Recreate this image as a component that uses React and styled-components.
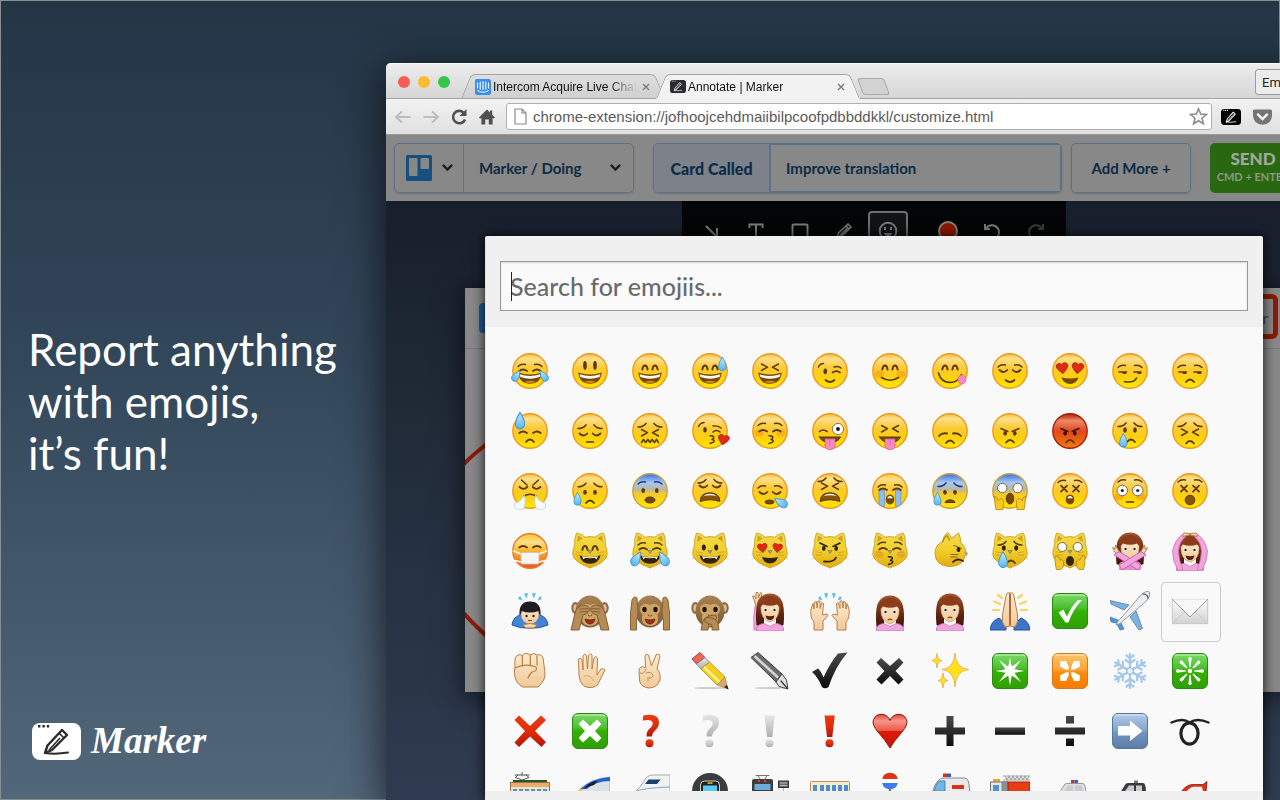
import React from 'react';
import styled, { createGlobalStyle } from 'styled-components';

const GlobalStyle = createGlobalStyle`
  * {
    box-sizing: border-box;
  }

  body {
    margin: 0;
    font-family: Lato, sans-serif;
  }

  button, input {
    font-family: inherit;
    margin: 0;
  }
`;

/* ---------- layout ---------- */

const Page = styled.div`
  position: relative;
  display: flex;
  height: 100vh;
  overflow: hidden;
  background: linear-gradient(#243546, #33475a 45%, #53677b);

  &::after {
    content: '';
    position: absolute;
    inset: 0;
    border: 1px solid #8b8e91;
    pointer-events: none;
  }
`;

const Promo = styled.aside`
  display: flex;
  flex-direction: column;
  justify-content: space-between;
  flex: 0 0 386px;
  padding: 323px 0 36px 28px;
  color: white;
`;

const Headline = styled.h1`
  margin: 0;
  font-size: 44px;
  font-weight: 400;
  line-height: 52px;
`;

const Logo = styled.div`
  display: flex;
  align-items: center;
  gap: 10px;
  padding-left: 4px;
  height: 46px;
`;

const LogoName = styled.span`
  font-family: 'Liberation Serif', serif;
  font-size: 37px;
  font-style: italic;
  font-weight: 700;
  line-height: 44px;
`;

const BrowserWindow = styled.main`
  position: relative;
  z-index: 1;
  display: flex;
  flex-direction: column;
  flex: 1;
  margin: 63px -82px 0 0;
  border-radius: 5px 5px 0 0;
  box-shadow: 0 10px 40px 4px rgba(0, 0, 0, 0.6);
`;

const TabStrip = styled.div`
  display: flex;
  align-items: flex-end;
  height: 36px;
  padding-left: 12px;
  border-bottom: 1px solid #a3a3a3;
  border-radius: 5px 5px 0 0;
  background: linear-gradient(#ededed, #d6d6d6);
  box-shadow: inset 0 1px 0 #f8f8f8;
`;

const Lights = styled.div`
  display: flex;
  gap: 8px;
  width: 68px;
  padding-bottom: 10px;
`;

const Light = styled.span`
  width: 12px;
  height: 12px;
  border-radius: 50%;
  background: ${props => props.color};
`;

const Tab = styled.div`
  position: relative;
  z-index: ${props => (props.$active ? 2 : 1)};
  display: flex;
  align-items: center;
  width: 194px;
  height: 25px;
  margin: 0 1px -1px 0;
  padding: 0 7px 0 9px;
  gap: 2px;
  font-family: 'Liberation Sans', sans-serif;
  font-size: 12px;
  color: #111;

  &::before, &::after {
    content: '';
    position: absolute;
    z-index: -1;
    top: 0;
    bottom: 0;
    border: 1px solid #a3a3a3;
    border-bottom: 1px solid ${props => (props.$active ? '#f2f2f2' : '#a3a3a3')};
    background: ${props => (props.$active ? '#f2f2f2' : 'linear-gradient(#dedede, #d0d0d0)')};
  }

  &::before {
    left: 0;
    right: 50%;
    border-right: 0;
    border-radius: 5px 0 0 0;
    transform: skewX(-22deg);
  }

  &::after {
    left: 40%;
    right: 0;
    border-left: 0;
    border-radius: 0 5px 0 0;
    transform: skewX(22deg);
  }
`;

const TabTitle = styled.span`
  flex: 1;
  overflow: hidden;
  white-space: nowrap;
  line-height: 16px;
  mask-image: linear-gradient(to right, black 80%, transparent);
`;

const TabClose = styled.button`
  display: flex;
  padding: 3px;
  border: 0;
  background: none;
`;

const NewTab = styled.button`
  width: 27px;
  height: 17px;
  margin: 0 0 3px 4px;
  padding: 0;
  border: 1px solid #aaa;
  border-radius: 3px;
  background: #d2d2d2;
  transform: skewX(20deg);
`;

const ProfileButton = styled.button`
  width: 90px;
  height: 26px;
  margin: 0 17px 3px auto;
  padding: 0 6px;
  border: 1px solid #9b9b9b;
  border-radius: 3px;
  background: #ececec;
  font-family: Roboto, sans-serif;
  font-size: 13px;
  text-align: left;
  color: #222;
`;

const NavBar = styled.div`
  display: flex;
  align-items: center;
  height: 36px;
  padding: 0 8px 0 3px;
  border-bottom: 1px solid #9a9a9a;
  background: linear-gradient(#f2f2f2, #e0e0e0);
`;

const NavButton = styled.button`
  display: flex;
  justify-content: center;
  width: 28px;
  padding: 0;
  border: 0;
  background: none;
`;

const AddressBar = styled.div`
  display: flex;
  align-items: center;
  flex: 1;
  height: 27px;
  margin: 0 9px 0 5px;
  padding: 0 3px 0 7px;
  gap: 6px;
  border: 1px solid #b0b0b0;
  border-radius: 3px;
  background: white;
`;

const AddressInput = styled.input`
  flex: 1;
  padding: 0;
  border: 0;
  outline: 0;
  background: none;
  font-family: 'Liberation Sans', sans-serif;
  font-size: 15px;
  color: #5a5a5a;
`;

const Extensions = styled.div`
  display: flex;
  gap: 12px;
  width: 133px;
`;

/* ---------- extension page, dimmed under the picker ---------- */

const Workspace = styled.section`
  position: relative;
  display: flex;
  flex-direction: column;
  flex: 1;
  min-height: 0;
  overflow: hidden;
  background: linear-gradient(#151b28, #202a37 40%, #2f3b50);
`;

const CardBar = styled.div`
  display: flex;
  padding: 8px;
  height: 66px;
  background: #888;
  font-size: 16px;
  font-weight: 700;
  color: #0d2b45;
`;

const Group = styled.div`
  display: flex;
  height: 50px;
  margin-right: ${props => props.$gap}px;
  border: 1px solid #5d7184;
  border-radius: 5px;
  box-shadow: 0 1px 2px rgba(0, 0, 0, 0.15);
  overflow: hidden;
`;

const BarButton = styled.button`
  display: flex;
  align-items: center;
  justify-content: ${props => (props.$spread ? 'space-between' : 'center')};
  width: ${props => props.$width}px;
  padding: 0 ${props => (props.$spread ? 12 : 0)}px 0 ${props => (props.$spread ? 15 : 0)}px;
  gap: 10px;
  border: 0;
  border-right: ${props => (props.$divided ? '1px solid #5d7184' : '0')};
  background: none;
  font-size: 15px;
  font-weight: 700;
  color: inherit;
`;

const CardLabel = styled.label`
  display: flex;
  align-items: center;
  justify-content: center;
  width: 115px;
  background: #7d828a;
  font-weight: 900;
`;

const CardInput = styled.input`
  width: 292px;
  padding: 0 15px;
  border: 1px solid #5d7184;
  border-width: 1px 1px 1px 2px;
  outline: 0;
  background: none;
  font-size: 15px;
  font-weight: 700;
  color: inherit;
`;

const SendButton = styled.button`
  width: 86px;
  height: 50px;
  margin-left: 11px;
  padding: 0;
  border: 0;
  border-radius: 5px;
  background: #2a6711;
  color: #a2a89e;
  font-size: 17px;
  font-weight: 900;
  line-height: 18px;
`;

const SendHint = styled.small`
  display: block;
  font-size: 11px;
  font-weight: 700;
  color: #8b9a82;
`;

const Tools = styled.div`
  display: flex;
  align-self: center;
  width: 384px;
  height: 60px;
  padding: 10px;
  gap: 4px;
  background: #040506;
`;

const Tool = styled.button`
  display: flex;
  align-items: center;
  justify-content: center;
  flex: 0 0 40px;
  height: 40px;
  padding: 0;
  border: ${props => (props.$active ? '2px solid #6b6d6e' : '0')};
  border-radius: 4px;
  background: ${props => (props.$active ? '#111314' : 'none')};
  opacity: ${props => (props.$faded ? 0.45 : 1)};
`;

const ToolDivider = styled.span`
  width: 1px;
  height: 30px;
  margin: 5px 4px 5px 8px;
  background: #2b2c2d;
`;

const Shot = styled.div`
  position: relative;
  align-self: center;
  width: 818px;
  height: 404px;
  margin-top: 27px;
  background: #888;
  box-shadow: 0 4px 22px 4px rgba(0, 0, 0, 0.5);
`;

const ShotHeader = styled.div`
  display: flex;
  justify-content: space-between;
  height: 61px;
  padding: 6px 5px 0 14px;
  border-bottom: 1px solid #777;
`;

const ShotBrand = styled.span`
  width: 30px;
  height: 30px;
  margin-top: 9px;
  border-radius: 4px;
  background: #21568f;
`;

const Highlighted = styled.span`
  width: 120px;
  height: 45px;
  padding-right: 5px;
  border: 5px solid #8c1a08;
  border-radius: 6px;
  font-size: 16px;
  line-height: 38px;
  text-align: right;
  color: #3f474f;
`;

const Sketch = styled.svg`
  position: absolute;
  left: 0;
  top: 0;
`;

/* ---------- emoji picker ---------- */

const Overlay = styled.div`
  position: absolute;
  inset: 0;
  display: flex;
  justify-content: center;
  padding-top: 101px;
`;

const Picker = styled.div`
  display: flex;
  flex-direction: column;
  width: 778px;
  padding-bottom: 9px;
  border-left: 1px solid #e4e4e4;
  border-radius: 2px 2px 0 0;
  background: #f0f0f0;
  box-shadow: 0 0 12px 1px rgba(0, 0, 0, 0.75);
`;

const SearchBox = styled.div`
  position: relative;
  padding: 25px 15px 16px 14px;

  &::after {
    content: '';
    position: absolute;
    left: 25px;
    top: 36px;
    width: 1px;
    height: 29px;
    background: #222;
  }
`;

const SearchInput = styled.input`
  display: block;
  width: 100%;
  height: 50px;
  padding: 0 9px;
  border: 1px solid #999;
  border-radius: 0;
  outline: 0;
  background: #fafafa;
  box-shadow: inset 0 1px 2px rgba(0, 0, 0, 0.15);
  font-size: 25px;
  font-weight: 500;
  color: #333;

  &::placeholder {
    color: #6a6a6a;
    opacity: 1;
  }
`;

const EmojiList = styled.div`
  display: grid;
  grid-template-columns: repeat(12, 60px);
  grid-auto-rows: 60px;
  flex: 1;
  min-height: 0;
  padding: 15px;
  overflow: hidden;
  background: #f9f9f9;
`;

const EmojiButton = styled.button`
  display: flex;
  align-items: flex-start;
  padding: 8px;
  border: 1px solid ${props => (props.$selected ? '#ccc' : 'transparent')};
  border-radius: 4px;
  background: none;
`;

const Defs = styled.svg`
  position: absolute;
  width: 0;
  height: 0;
`;

/* ---------- drawing helpers, all on a 40 x 40 grid ---------- */

const INK = '#5a3906';

const Line = ({ d, c = INK, w = 1.6, fill = 'none' }) => (
  <path d={d} stroke={c} strokeWidth={w} strokeLinecap="round" strokeLinejoin="round" fill={fill} />
);

const Pair = ({ children }) => (
  <>
    {children}
    <g transform="matrix(-1 0 0 1 40 0)">{children}</g>
  </>
);

const Gradient = ({ id, stops }) => (
  <linearGradient id={id} x1="0" y1="0" x2="0" y2="1">
    {stops.map(([offset, color]) => (
      <stop key={offset} offset={offset} stopColor={color} />
    ))}
  </linearGradient>
);

const Gradients = () => (
  <Defs aria-hidden="true">
    <defs>
      <Gradient id="face" stops={[[0, '#f9bc34'], [0.14, '#fcdf8c'], [0.42, '#fbca34'], [0.7, '#fbd00c'], [1, '#ffea00']]} />
      <Gradient id="rage" stops={[[0, '#b01c08'], [0.2, '#ee8a68'], [0.5, '#e0481c'], [1, '#f27a08']]} />
      <Gradient id="fear" stops={[[0, '#2f6fe6'], [0.25, '#a9c6ee'], [0.46, '#b9b9a0'], [0.58, '#f5c92c'], [1, '#ffe800']]} />
      <Gradient id="sick" stops={[[0, '#fbc42c'], [0.25, '#fde08a'], [0.5, '#fbb42c'], [1, '#ee4f1c']]} />
      <Gradient id="cat" stops={[[0, '#f3dc4a'], [0.5, '#f1cf2c'], [1, '#e0ac10']]} />
      <Gradient id="drop" stops={[[0, '#c9ecfb'], [1, '#57b4ee']]} />
      <Gradient id="green" stops={[[0, '#7ed968'], [0.4, '#4cc232'], [0.5, '#35b004'], [1, '#2f9f06']]} />
      <Gradient id="orange" stops={[[0, '#fbc56a'], [0.45, '#fba53a'], [0.55, '#f98a0c'], [1, '#f57c00']]} />
      <Gradient id="blue" stops={[[0, '#b2cbe8'], [0.45, '#86a7cf'], [0.55, '#7094c0'], [1, '#5c7ca6']]} />
      <Gradient id="red" stops={[[0, '#ee3a12'], [0.55, '#dc2c0a'], [1, '#b4140a']]} />
      <Gradient id="black" stops={[[0, '#4a4a4a'], [1, '#0d0d0d']]} />
      <Gradient id="grey" stops={[[0, '#e6e6e6'], [1, '#b0b0b0']]} />
      <Gradient id="heart" stops={[[0, '#e8443a'], [0.2, '#f3978c'], [0.48, '#ec5a46'], [0.5, '#dd1c08'], [1, '#c81004']]} />
      <Gradient id="skin" stops={[[0, '#fdebcc'], [1, '#f0c898']]} />
      <Gradient id="hair" stops={[[0, '#a4552c'], [0.5, '#6e2c14'], [1, '#3c140a']]} />
      <Gradient id="monkey" stops={[[0, '#a98252'], [1, '#7d5a30']]} />
      <Gradient id="paper" stops={[[0, '#fcfcfc'], [1, '#d2d2d2']]} />
    </defs>
  </Defs>
);

const Art = ({ children }) => (
  <svg width="40" height="40" viewBox="0 0 40 40" aria-hidden="true">{children}</svg>
);

const Face = ({ fill = 'face', ring = '#ee9a20', children }) => (
  <Art>
    <circle cx="20" cy="20" r="17.2" fill={`url(#${fill})`} stroke={ring} strokeWidth="1.4" />
    {children}
  </Art>
);

const Oval = ({ x = 15, y = 18, rx = 1.8, ry = 2.8, c = INK }) => (
  <Pair><ellipse cx={x} cy={y} rx={rx} ry={ry} fill={c} /></Pair>
);

const Arches = ({ y = 0 }) => (
  <g transform={`translate(0 ${y})`}>
    <Pair><Line d="M12.3 18.5Q13 14.5 15 14.5Q17 14.5 17.6 18.5" w={1.9} /></Pair>
  </g>
);

const Squints = ({ y = 0 }) => (
  <g transform={`translate(0 ${y})`}>
    <Pair><Line d="M11.5 13L17.5 16.2L11.5 19.5" w={1.5} /></Pair>
  </g>
);

const Lids = ({ y = 19 }) => (
  <Pair><Line d={`M9.5 ${y}Q13.5 ${y + 4} 17.3 ${y}`} w={1.8} /></Pair>
);

const Naps = ({ y = 21.5 }) => (
  <Pair><Line d={`M9.3 ${y}Q13 ${y - 3} 17 ${y}`} w={1.8} /></Pair>
);

const SadBrows = ({ y = 15.5, c = INK }) => (
  <Pair><Line d={`M8 ${y}Q13 ${y} 16 ${y - 3.6}`} c={c} w={1.5} /></Pair>
);

const ArchBrows = ({ y = 14.5, c = INK }) => (
  <Pair><Line d={`M8 ${y}Q11 ${y - 3} 15.5 ${y - 2}`} c={c} w={1.4} /></Pair>
);

const Crosses = ({ y = 17.7 }) => (
  <Pair><Line d={`M11 ${y - 3}L17 ${y + 3}M17 ${y - 3}L11 ${y + 3}`} w={1.7} /></Pair>
);

const WideEyes = ({ y = 19.5, r = 5.3, dot = 1.6 }) => (
  <Pair>
    <circle cx="12.3" cy={y} r={r} fill="white" stroke="#7b6a58" strokeWidth="1" />
    {dot > 0 && <circle cx="12.3" cy={y} r={dot} fill="#222" />}
  </Pair>
);

const Grin = () => (
  <>
    <path d="M8.3 21.5Q20 25.5 31.7 21.5Q30.5 32.8 20 32.8Q9.5 32.8 8.3 21.5Z" fill="#7c4706" />
    <path d="M9.6 23.2Q20 26.6 30.4 23.2Q30.2 24.8 29.5 26Q20 29.6 10.5 26Q9.8 24.8 9.6 23.2Z" fill="white" />
    <path d="M14 31Q20 28.6 26 31Q20 33 14 31Z" fill="#c98a1c" />
  </>
);

const Smile = ({ y = 28.5 }) => <Line d={`M15.5 ${y}Q20 ${y + 4} 24.5 ${y}`} w={1.7} />;
const Frown = ({ x = 20, y = 31 }) => <Line d={`M${x - 4} ${y}Q${x} ${y - 5} ${x + 4} ${y}`} w={1.8} />;
const Kiss = ({ x = 22, y = 28.5, c = INK }) => (
  <Line d={`M${x - 2} ${y - 3.8}Q${x + 3} ${y - 3.6} ${x + 1.5} ${y - 1.4}L${x} ${y}Q${x + 3.5} ${y + 0.6} ${x + 1.5} ${y + 2.6}L${x - 2} ${y + 4}`} c={c} w={1.5} />
);

const Wail = () => (
  <>
    <path d="M10 30.5Q10.5 21.8 20 21.8Q29.5 21.8 30 30.5Q20 27 10 30.5Z" fill="#8a5408" stroke={INK} strokeWidth="1" />
    <path d="M13.2 25.2Q20 20.5 26.8 25.2Q20 23.4 13.2 25.2Z" fill="white" />
  </>
);

const Gape = ({ y = 28 }) => (
  <>
    <ellipse cx="20" cy={y} rx="3.8" ry="4.4" fill="#7c4706" stroke={INK} strokeWidth="0.8" />
    <path d={`M17 ${y - 1.2}Q20 ${y - 6} 23 ${y - 1.2}Z`} fill="white" />
  </>
);

const Tongue = () => (
  <>
    <Line d="M9.5 26H30.5Q28 31.5 20 31.5Q12 31.5 9.5 26Z" w={1} fill="#7c4706" />
    <path d="M15 28H25V34Q25 38.6 20 38.6Q15 38.6 15 34Z" fill="#f58cc0" stroke="#d0609a" strokeWidth="0.8" />
    <Line d="M20 29V34" c="#d0609a" w={0.8} />
  </>
);

const Cheeks = ({ y = 23 }) => (
  <Pair><ellipse cx="9" cy={y} rx="4.6" ry="3.4" fill="#f58a1c" opacity="0.45" /></Pair>
);

const Drop = ({ x, y, s = 1, r = 0 }) => (
  <path
    transform={`translate(${x} ${y}) rotate(${r}) scale(${s})`}
    d="M0-7.5Q4-1 4 2.5A4 4.4 0 0 1-4 2.5Q-4-1 0-7.5Z"
    fill="url(#drop)"
    stroke="#3d93d4"
    strokeWidth="0.9"
  />
);

const HEART = 'M0 6Q-6.5 .5-6.5-3A3.4 3.4 0 0 1 0-3.6A3.4 3.4 0 0 1 6.5-3Q6.5 .5 0 6Z';
const Heart = ({ x, y, s = 0.9, r = 0 }) => (
  <path transform={`translate(${x} ${y}) rotate(${r}) scale(${s})`} d={HEART} fill="#e02a18" stroke="#a81408" strokeWidth="0.8" />
);

const Cat = ({ blush, children }) => (
  <Art>
    <Pair><Line d="M5 24L1.5 23M5 27L2 28" c="#cfcfc6" w={0.6} /></Pair>
    <path d="M6.5 2Q11 2.5 15 6.2Q20 5 25 6.2Q29 2.5 33.5 2Q36 8 35.3 14Q38.6 22 36 27Q32 32 27 34Q23 35.5 20 37Q17 35.5 13 34Q8 32 4 27Q1.4 22 4.7 14Q4 8 6.5 2Z" fill="url(#cat)" stroke="#cfa01c" strokeWidth="0.9" />
    <Pair><path d="M7.8 4.4Q10.5 5.5 12.6 7.6L7.2 11Z" fill="#cfa22c" /></Pair>
    {blush && <Cheeks y={23.5} />}
    <Pair><Line d="M6 20.8L12 21.8M6.5 24.2L11.5 24" c="#cda428" w={0.9} /></Pair>
    {children}
    <path d="M17.8 19.5H22.2L20 22.6Z" fill="#a39a90" stroke="#7d7468" strokeWidth="0.6" />
  </Art>
);

const CatGrin = () => (
  <>
    <path d="M9.5 24.5Q20 27.5 30.5 24.5Q28.5 32.8 20 32.8Q11.5 32.8 9.5 24.5Z" fill="#33240e" />
    <path d="M12 25.6L13.6 28.4L15 26.8Q20 27.6 25 26.8L26.4 28.4L28 25.6Q20 27 12 25.6Z" fill="white" />
  </>
);

const Monkey = ({ children }) => (
  <Art>
    <Pair><ellipse cx="5.5" cy="17" rx="4.2" ry="6" fill="#8d6a3e" /><ellipse cx="5.5" cy="17" rx="2.2" ry="3.8" fill="#e0b8a8" /></Pair>
    <ellipse cx="20" cy="20.5" rx="14.5" ry="16" fill="url(#monkey)" />
    <path d="M20 14Q26 11 29.5 15.5Q31 20 27.5 23.5Q30 34.5 20 35Q10 34.5 12.5 23.5Q9 20 10.5 15.5Q14 11 20 14Z" fill="#cfa468" />
    <Line d="M18.5 24L19 25M21.5 24L21 25" w={1} />
    <path d="M15 28Q20 30 25 28Q24 33 20 33Q16 33 15 28Z" fill="#a8281c" stroke="#5a2408" strokeWidth="0.7" />
    {children}
  </Art>
);

const Paw = ({ d }) => <path d={d} fill="#b58c56" stroke="#7d592e" strokeWidth="0.9" strokeLinejoin="round" />;

const Woman = ({ back, front, frown, smile, y = 0, body }) => (
  <Art>
    {back}
    <g transform={`translate(0 ${y})`}>
      <path d="M6.5 34Q5 20 7.5 11Q11 2.5 20 2.5Q29 2.5 32.5 11Q35 20 33.5 34Q30 36 26 34V20H14V34Q10 36 6.5 34Z" fill="url(#hair)" />
      <path d="M10.8 16Q12 8.5 20 8.5Q28 8.5 29.2 16Q29.5 28.5 20 31Q10.5 28.5 10.8 16Z" fill="url(#skin)" stroke="#b98a5c" strokeWidth="0.6" />
      <path d="M9.5 19Q9 5 20 5Q31 5 30.5 19Q29.5 15.5 27 13.5Q20 16 13 13.5Q10.5 15.5 9.5 19Z" fill="#8a3c1c" />
      <Pair><ellipse cx="15.3" cy="19" rx="1.7" ry="1.9" fill="white" /><circle cx="15.5" cy="19" r="1.2" fill="#2c1c10" /></Pair>
      {smile && <path d="M15.5 24.5Q20 26 24.5 24.5Q23.5 29 20 29Q16.5 29 15.5 24.5Z" fill="#5a1c10" />}
      {frown && <Line d="M18.2 26.8Q20 25.6 21.8 26.8" c="#8a3a24" w={1.2} />}
    </g>
    {body || <path d="M6.5 40V37Q8 33 14 32.5L20 35.5L26 32.5Q32 33 33.5 37V40Z" fill="#f2a4de" stroke="#cc74b4" strokeWidth="0.8" />}
    {front}
  </Art>
);

const Hand = ({ d }) => <path d={d} fill="url(#skin)" stroke="#b87e48" strokeWidth="1" strokeLinejoin="round" />;

const Rays = () => (
  <Pair><path d="M8 8L12.5 9.5L10 4.8ZM14 2.5L16.5 7.8L18 2Z" fill="#5cb8ee" /></Pair>
);

const Tile = ({ fill, ring, children }) => (
  <Art>
    <rect x="2.5" y="2.5" width="35" height="35" rx="5.5" fill={`url(#${fill})`} stroke={ring} />
    <path d="M5 5.2Q6 4 8 4H32Q34 4 35 5.2" stroke="white" strokeWidth="1.2" opacity="0.6" fill="none" />
    {children}
  </Art>
);

const MarkArt = ({ d, dot, fill }) => (
  <Art>
    <path d={d} fill={`url(#${fill})`} />
    {dot && <circle cx="19.5" cy="32.2" r="4" fill={`url(#${fill})`} />}
  </Art>
);

const QUESTION = 'M12.8 9.5L13.2 4.5Q29 1.5 29 11.5Q29 16 25 19.5Q22 22 21.8 25.5H16.6Q16 20.5 20 17.3Q23 15 22.8 12Q22 7.5 12.8 9.5Z';
const EXCLAIM = 'M14.5 4.5H24.8L22.3 26H17Z';

/* ---------- the emoji set ---------- */

const EMOJIS = [
  ['joy', <Face><ArchBrows y={15.5} /><Naps y={20} /><Grin /><Drop x={6.3} y={25} s={0.85} r={35} /><Drop x={33.7} y={25} s={0.85} r={-35} /></Face>],
  ['smiley', <Face><Oval y={14.3} ry={4.4} /><Grin /></Face>],
  ['smile', <Face><Arches /><Grin /></Face>],
  ['sweat smile', <Face><Arches /><Grin /><Drop x={32.3} y={13} s={0.95} /></Face>],
  ['laughing', <Face><Squints /><Grin /></Face>],
  ['wink', <Face><Line d="M8.5 16Q10 12.5 13.5 12.5M24 16Q28 14.5 31 17" w={1.4} /><ellipse cx="15.3" cy="20.3" rx="1.8" ry="2.9" fill={INK} /><Line d="M22.5 21.5Q26.5 18.8 30 21.5" /><Smile y={29} /></Face>],
  ['blush', <Face><Cheeks /><Arches /><Line d="M11.5 26.5Q20 32 28.5 26.5" w={1.5} /></Face>],
  ['yum', <Face><Arches /><Line d="M8.5 22Q11 31.5 20 31.5Q28 31.5 31.5 23.5" /><ellipse cx="32" cy="28.5" rx="4" ry="4.4" fill="#f58cc0" stroke="#d869a4" strokeWidth="0.8" /></Face>],
  ['relieved', <Face><ArchBrows y={16} /><Lids /><Smile y={29} /></Face>],
  ['heart eyes', <Face><Heart x={12.3} y={17.2} r={-8} /><Heart x={27.7} y={17.2} r={8} /><path d="M11.5 26.5Q20 28.6 28.5 26.5Q26.5 33 20 33Q13.5 33 11.5 26.5Z" fill="#7c4706" /></Face>],
  ['smirk', <Face><ArchBrows y={16.5} /><Line d="M9 21H16.5M24 21H31" /><Line d="M13.5 22H15.5M28.3 22H30.3" w={2} /><Line d="M14.5 30.8Q24.5 32 26.5 27" /></Face>],
  ['unamused', <Face><ArchBrows y={16.5} /><Line d="M9 21H16.5M24 21H31" /><Line d="M13.5 22H15.5M28.3 22H30.3" w={2} /><Frown /></Face>],

  ['sweat', <Face><Naps y={22} /><Frown /><Drop x={10} y={10} s={1.15} /></Face>],
  ['pensive', <Face><SadBrows y={17.5} /><Lids y={22.5} /><Line d="M16.5 31H23.5" /></Face>],
  ['confounded', <Face><SadBrows y={16} /><Squints y={5.5} /><Line d="M11.5 31.5L13.5 28.5L15.7 31.5L17.9 28.5L20 31.5L22.1 28.5L24.3 31.5L26.5 28.5L28.5 31.5" /></Face>],
  ['kissing heart', <Face><Line d="M8.5 15.5Q10 12 14 11.5M23 15Q28 14.5 31 17" w={1.4} /><ellipse cx="15" cy="18.7" rx="1.8" ry="2.8" fill={INK} /><Line d="M23 21Q26.5 18 30 21" /><Kiss /><Heart x={33.5} y={28.8} s={0.85} r={12} /></Face>],
  ['kissing closed eyes', <Face><Cheeks y={22} /><ArchBrows y={14.5} /><Naps y={20.5} /><Kiss x={21} /></Face>],
  ['stuck out tongue winking eye', <Face><Line d="M9.5 20.5Q13 17.5 17 20.5" /><circle cx="28" cy="18" r="5.6" fill="white" stroke="#8a7a68" /><circle cx="28" cy="18" r="1.9" fill="#111" /><Tongue /></Face>],
  ['stuck out tongue closed eyes', <Face><Squints y={1.5} /><Tongue /></Face>],
  ['disappointed', <Face><Pair><Line d="M9 25Q12 21.5 17 22.5" w={1.8} /></Pair><Frown y={32} /></Face>],
  ['angry', <Face><Pair><Line d="M11 17.5L17.8 20.5" /></Pair><Oval x={15.2} y={22.3} ry={2.4} /><Frown y={31.5} /></Face>],
  ['rage', <Face fill="rage" ring="#a8200c"><Pair><Line d="M11 17.5L17.8 20.5" c="#3c1004" /></Pair><Oval x={15.2} y={22.3} ry={2.4} c="#3c1004" /><Frown y={31.5} /></Face>],
  ['cry', <Face><SadBrows y={15.5} /><Oval y={19} /><Frown x={21} y={31} /><Drop x={13.3} y={29.5} s={0.95} /></Face>],
  ['persevere', <Face><SadBrows y={15.5} /><Squints y={5} /><Frown y={32.5} /></Face>],

  ['triumph', <Face><Pair><Line d="M11.5 9L17 14" w={1.5} /></Pair><Lids y={15.8} /><Line d="M14 25Q20 21.5 26 25" /><Pair><path d="M14.5 24Q15.5 29 15 33Q14.5 39 9.5 38.5Q4 38.5 4.3 33.5Q5 30.5 8.5 31Q12 29 14.5 24Z" fill="#f8fcfe" stroke="#b4d3e2" strokeWidth="0.8" /></Pair></Face>],
  ['disappointed relieved', <Face><SadBrows y={15.8} /><Oval y={21.3} ry={2.5} /><Frown y={32} /><Drop x={7.5} y={28} s={0.9} /></Face>],
  ['fearful', <Face fill="fear" ring="#c9a23c"><ArchBrows y={13} c="#1b3a8c" /><Oval x={13.2} y={19.5} ry={2.5} /><ellipse cx="20" cy="29" rx="5" ry="3" fill="#7c4706" stroke={INK} /></Face>],
  ['weary', <Face><SadBrows y={12} /><Lids y={14.5} /><Wail /></Face>],
  ['sleepy', <Face><ArchBrows y={17} /><Lids y={21} /><ellipse cx="19.5" cy="31" rx="4.6" ry="2" fill="#7c4706" stroke={INK} /><Drop x={31} y={31.5} s={1} r={-60} /></Face>],
  ['tired face', <Face><SadBrows y={10.5} /><Squints y={-1} /><Wail /></Face>],
  ['sob', <Face><ArchBrows y={16} /><Pair><path d="M9 19H14.5V35.5Q11.5 35 9 33.5Z" fill="#8dbcf0" stroke="#5d94d4" strokeWidth="0.7" /></Pair><Naps y={19} /><Gape y={28.5} /></Face>],
  ['cold sweat', <Face fill="fear" ring="#c9a23c"><SadBrows y={15.5} c="#1b3a8c" /><Oval y={21.3} ry={2.4} /><path d="M15 31.5Q15.5 28.8 20 28.8Q24.5 28.8 25 31.5Z" fill="#7c4706" stroke={INK} /><Drop x={7.5} y={28} s={0.9} /></Face>],
  ['scream', <Face fill="fear" ring="#c9a23c"><WideEyes y={17} r={4.7} dot={0} /><ellipse cx="20" cy="27.6" rx="3.8" ry="5.4" fill="#7c4706" stroke={INK} /><Pair><path d="M4.5 25Q8 26 7.5 30Q9 27.5 12 27.5Q14.5 29 13.5 33L13 38.5H6Q4.5 32 4.5 25Z" fill="#fbc824" stroke="#c08a10" strokeWidth="0.9" /></Pair></Face>],
  ['astonished', <Face><ArchBrows y={11.5} /><Crosses /><Gape y={28.5} /></Face>],
  ['flushed', <Face><Cheeks y={26} /><ArchBrows y={11} /><WideEyes /><Line d="M16.5 31H23.5" /></Face>],
  ['dizzy face', <Face><ArchBrows y={11} /><Crosses /><circle cx="20" cy="29" r="4.8" fill="#8a5408" stroke={INK} /></Face>],

  ['mask', <Face fill="sick" ring="#ee7a24"><Naps y={16.5} /><Pair><Line d="M11 23L3.5 20M11 31L5 29.5" c="white" w={1.6} /></Pair><rect x="11" y="21.5" width="18" height="11.5" rx="1.5" fill="#f5f5f5" stroke="#c4c4c4" strokeWidth="0.8" /></Face>],
  ['smile cat', <Cat><Arches y={0.5} /><CatGrin /></Cat>],
  ['joy cat', <Cat><ArchBrows y={14} /><Naps y={18.5} /><CatGrin /><Drop x={6.3} y={28} s={1.05} r={30} /><Drop x={33.7} y={28} s={1.05} r={-30} /></Cat>],
  ['smiley cat', <Cat><Oval x={13.8} y={16.5} rx={2} ry={3} c="#2c2010" /><CatGrin /></Cat>],
  ['heart eyes cat', <Cat><Heart x={12.5} y={17} s={0.75} r={-8} /><Heart x={27.5} y={17} s={0.75} r={8} /><path d="M12 26Q20 28 28 26Q26 32.5 20 32.5Q14 32.5 12 26Z" fill="#33240e" /></Cat>],
  ['smirk cat', <Cat><Pair><Line d="M10 12L17 15.5" c="#2c2010" /></Pair><Oval x={13.8} y={17.5} rx={1.8} ry={2.4} c="#2c2010" /><Line d="M14 30.5Q24 31.5 26 26.5" c="#33240e" w={1.8} /></Cat>],
  ['kissing cat', <Cat blush><ArchBrows y={13.5} /><Naps y={18.5} /><Kiss x={20.5} y={29.5} c="#33240e" /></Cat>],
  ['pouting cat', <Art><path d="M13 10.5Q13 5 17.5 1.5Q20.5 4 21.5 7.5Q25 5 28.5 2Q31 7 30.5 11Q35.5 16 36.5 22Q37 24 35 25Q33 35 20 35.5Q5.5 35 5 22.5Q5 13.5 13 10.5Z" fill="url(#cat)" stroke="#cfa01c" /><Path13 /><Line d="M24 14.5L31.5 17.5M21 23.5H28M21 26H27" c="#8c6a1a" w={1.2} /><ellipse cx="28.5" cy="18.5" rx="1.9" ry="2.6" fill="#2c2010" /><Line d="M23 31Q27 26.5 33 30" c="#33240e" w={1.8} /><path d="M34 21L38 22L36.5 25Z" fill="#a39a90" /></Art>],
  ['crying cat', <Cat><SadBrows y={14} /><Oval x={13.8} y={17} rx={2} ry={2.7} c="#2c2010" /><Frown x={21} y={32} /><Drop x={13} y={29} s={1.1} /></Cat>],
  ['scream cat', <Cat><WideEyes y={16} r={4.5} dot={0} /><ellipse cx="20" cy="30" rx="4" ry="5" fill="#33240e" /><Pair><path d="M5 25Q9 24.5 10 29Q13.5 28 13.5 32Q14 37 11 38.5H6.5Q4.5 32 5 25Z" fill="#f0c828" stroke="#b98a18" strokeWidth="0.9" /></Pair></Cat>],
  ['no good', <Woman y={-1} body={<path d="M9 39V33Q12 29 20 30Q28 29 31 33V39Z" fill="#e88ad0" />} front={<><Pair><Hand d="M6 23L2.5 16.5L5 18L5.5 14L7.5 18L10 21Z" /></Pair><path d="M4 24L9 20.5L31 34L28 39Z" fill="#f2a4de" stroke="#b8609c" strokeWidth="0.8" /><path d="M36 24L31 20.5L9 34L12 39Z" fill="#f2a4de" stroke="#b8609c" strokeWidth="0.8" /></>} />],
  ['ok woman', <Woman smile front={<><Pair><path d="M13 3Q5 8 2.5 20Q2.5 30 8 39H13Q9 30 8.5 20Q9.5 10 15.5 6Z" fill="#f2a4de" stroke="#cc74b4" strokeWidth="0.8" /></Pair><Pair><Hand d="M19.5 4L13 5.5Q12 2.5 14 2L19.5 2.5Z" /></Pair></>} />],

  ['bow', <Art><Rays /><path d="M2 34Q3 25 13 23H27Q37 25 38 34Q29 38 20 37Q11 38 2 34Z" fill="#3f86d8" stroke="#23589c" /><circle cx="20" cy="24" r="9" fill="url(#skin)" stroke="#b98a5c" strokeWidth="0.6" /><path d="M9.5 24Q8.5 10.5 20 10.5Q31.5 10.5 30.5 24Q29 24 28.5 20Q20 23 11.5 20Q11 24 9.5 24Z" fill="#1c1c22" /><Oval x={16.5} y={25} rx={1.2} ry={1.3} c="#222" /><Hand d="M13 34Q20 31 27 34L24 37H16Z" /><Line d="M18.5 29.5H21.5" c="#8a3a24" w={1} /></Art>],
  ['see no evil', <Monkey><Pair><Paw d="M1 39L5 22Q7 14.5 14 14Q19 14.5 19.3 18Q19.5 22.5 13 24L9 39Z" /><Line d="M10 18L18 17.5M10 21L18 20.5" c="#7d592e" w={0.8} /></Pair></Monkey>],
  ['hear no evil', <Monkey><Oval x={14.5} y={18.5} rx={2.2} ry={2.8} c="#221408" /><Pair><Paw d="M0.5 39V22L2 9Q4 4.5 7 7L8 20Q8 26 6.5 30V39Z" /></Pair></Monkey>],
  ['speak no evil', <Monkey><Oval x={14.5} y={18.5} rx={2.2} ry={2.8} c="#221408" /><Paw d="M11 39L12.5 31Q14 26 21 24.5L26 24Q28 27 25 30L19 33L18 39Z" /><Paw d="M29 39L28 32Q27 28 22 27Q16 26 14.5 28Q14 31 18 32.5L22 34V39Z" /></Monkey>],
  ['raising hand', <Woman smile back={<><Hand d="M6 16L4.5 10L2.5 5L4.5 5L6 8L6 1.5H8L8.5 7L10.5 1.5L12 2.5L11 7L13.5 5.5L14 7L11 12L11.5 16Z" /><path d="M5 15H12L13 34L8 39H4Q3 26 5 15Z" fill="#f2a4de" stroke="#cc74b4" strokeWidth="0.8" /></>} />],
  ['raised hands', <Art><Rays /><Pair><Hand d="M4 39V31Q0 27 1 18L3 12.5L4 18L4.5 11L6.5 10.5L7 17L8 10H10L10 17.5L12 11.5L13.5 12.5L12.5 24L17 23L18 24.5L13 30V39Z" /></Pair></Art>],
  ['person frowning', <Woman y={2} frown />],
  ['pouting', <Woman frown />],
  ['pray', <Art><Pair><Line d="M12 7L8 4M10 13L4 10.5M9 19H3" c="#f7d268" w={2.2} /></Pair><path d="M0 39Q1 30 9 27L16 33V39Z" fill="#3f74c8" stroke="#23509c" /><path d="M40 39Q39 30 31 27L24 33V39Z" fill="#3f74c8" stroke="#23509c" /><Pair><Hand d="M20 35L15 36Q11 31 12.5 24L16 5Q16.5 2 18 2H20Z" /></Pair><Line d="M20 4V33" c="#a86840" w={2} /></Art>],
  ['white check mark', <Tile fill="green" ring="#2a8c12"><path d="M8.5 21.5L13.5 18.5L17 25.5Q21 16 28 9H32Q23 18 18.5 31.5H15.5Z" fill="white" /></Tile>],
  ['airplane', <Art><path d="M19 14L0 9.5L1 13L14 19Z" fill="#7ab4e6" stroke="#4c6c8c" strokeWidth="0.7" /><path d="M26 20L32.5 37.5L29 39L20 26Z" fill="#7ab4e6" stroke="#4c6c8c" strokeWidth="0.7" /><path d="M8 29L0 26L1 31L6.5 32L10 39L14 38L11 32Z" fill="#4c9ade" stroke="#3c6c9c" strokeWidth="0.7" /><path d="M6 34Q7 30 12 26L31 4Q36 -1 39.5 1Q41 4.5 36.5 10L14 29Q10 33.5 6 34Z" fill="#eceff2" stroke="#8a9096" strokeWidth="0.9" /><Line d="M33 3Q37.5 3 38 7" c="#444" w={1.2} /></Art>],
  ['envelope', <Art><rect x="2.3" y="8.3" width="35.4" height="24.4" fill="url(#paper)" stroke="#c2c2c2" strokeWidth="0.8" /><Line d="M2.5 32.5L15 20.5M37.5 32.5L25 20.5" c="#c6c6c6" w={0.8} /><Line d="M2.5 8.5L20 26L37.5 8.5" c="#9a9a9a" w={1} fill="#f8f8f8" /></Art>],

  ['fist', <Art><Hand d="M5 16Q4 5 8 4Q11 3 12 5Q14 1.5 18.5 3Q20 3 20.5 4Q24 1 27 4Q32 3 33 7L34.5 18Q37 29 28 36H13Q4 32 4.5 20Z" /><Line d="M12.3 5V15M20.3 4V14M27 5V14M5 17Q15 12 26 16Q28 20 22 21Q19 24 18 27" c="#b87e48" w={1.2} /></Art>],
  ['raised hand', <Art><Hand d="M9 24L8.5 9Q10 5.5 12 9L13 19L13 5Q15 1.5 16.5 5L17.5 18L18.5 4Q20.5 1 22 4L22 18L24 7Q26 4 27.5 7L27 24L31 18Q34 17 35 19L28 33Q25 37 19 36.5Q10 36 9 24Z" /><Line d="M14 25Q20 23 24 30" c="#d8a878" w={1} /></Art>],
  ['v', <Art><Hand d="M9 18Q12 14 15 17L15.5 16L15 5Q16 2 18.5 4L21.5 15L26 4Q29 1.5 30 5L27 18Q31 22 30 29Q27 37 19 37Q10 36 9.5 29Z" /><Line d="M10 22Q14 24 16 18M16 22Q21 20 23 24Q23 27 18 27M18 27V30" c="#c48c54" w={1} /></Art>],
  ['pencil', <Art><ellipse cx="20" cy="37" rx="16" ry="1" fill="#ccc" /><path d="M2 8L10 1.5L15 6.5L6.5 13Z" fill="#e8685c" stroke="#a83c34" /><path d="M6.5 13L15 6.5L19.5 11L11 18Z" fill="url(#grey)" stroke="#777" strokeWidth="0.8" /><path d="M11 18L19.5 11L35 26L27 34Z" fill="#f2cf1c" stroke="#b48c10" strokeWidth="0.8" /><path d="M14 16L30 31.5" stroke="#fbf08c" strokeWidth="2.6" /><path d="M27 34L35 26L38 38Z" fill="#d8a870" stroke="#a87838" strokeWidth="0.6" /><path d="M34 36L37 34L38.5 38.5Z" fill="#222" /></Art>],
  ['black nib', <Art><ellipse cx="20" cy="37" rx="16" ry="1" fill="#ccc" /><path d="M1 6.5L8 1.5L32 23L26 31Z" fill="#6c6c6c" stroke="#3c3c3c" /><path d="M4.5 5L28 26.5" stroke="#d5d5d5" strokeWidth="2.6" /><path d="M26 31L32 23L36.5 29L38 38L29 35.5Z" fill="#e0e0e0" stroke="#444" /><Line d="M31 30L37 37" c="#333" w={1.2} /></Art>],
  ['heavy check mark', <Art><path d="M2 21L8 17.5Q11 20 13.5 26.5Q20 12 28 2.5L37.5 1.5Q25 16 18.5 36Q15 38.5 12 36Q8 26 2 21Z" fill="url(#black)" /></Art>],
  ['heavy multiplication x', <Art><path d="M11 7L20 15L29 7L33.5 11.5L25.5 20L33.5 28.5L28.5 33.5L20 25L11.5 33.5L6.5 28.5L14.5 20L6.5 11.5Z" fill="url(#black)" /></Art>],
  ['sparkles', <Art><g fill="#ffe01c" stroke="#e8a43c" strokeWidth="0.8"><path d="M25 2Q25.6 17 38.5 18.5Q25.6 20 25 36Q24.4 20 12 18.5Q24.4 17 25 2Z" /><path d="M7 2.5Q7.3 9 12 9.5Q7.3 10 7 17Q6.7 10 2 9.5Q6.7 9 7 2.5Z" /><path d="M13 22Q13.3 29 18 29.5Q13.3 30 13 37Q12.7 30 8 29.5Q12.7 29 13 22Z" /></g></Art>],
  ['eight pointed star', <Tile fill="green" ring="#2a8c12"><path d="M20 6.5L21.8 15.6L31 9L24.4 18.2L34.5 20L24.4 21.8L31 31L21.8 24.4L20 34.5L18.2 24.4L9 31L15.6 21.8L5.5 20L15.6 18.2L9 9L18.2 15.6Z" fill="white" /></Tile>],
  ['eight spoked x', <Tile fill="orange" ring="#d87a1c"><Pair><path d="M10.5 10H16L18.8 16L18.8 18.8L16 18.8L10 15.5ZM10.5 30H16L18.8 24L18.8 21.2L16 21.2L10 24.5Z" fill="white" /></Pair></Tile>],
  ['snowflake', <Art><g stroke="#a4c8ec" strokeWidth="2.2" strokeLinecap="round" fill="none">{[0, 60, 120, 180, 240, 300].map(a => <path key={a} transform={`rotate(${a} 20 20)`} d="M20 18V3M20 7L16.5 4.5M20 7L23.5 4.5M20 12L15.5 9M20 12L24.5 9" />)}</g><circle cx="20" cy="20" r="3.4" fill="#e4f1fb" stroke="#86b0dc" /></Art>],
  ['sparkle', <Tile fill="green" ring="#2a8c12"><g fill="white">{[0, 45, 90, 135, 180, 225, 270, 315].map(a => <path key={a} transform={`rotate(${a} 20 20)`} d="M19.4 16L18.3 7Q20 4.8 21.7 7L20.6 16Z" />)}<circle cx="20" cy="20" r="2.3" /></g></Tile>],

  ['x', <MarkArt fill="red" d="M9 4.5L20 15L31 4.5L36 9L25 20L36 31L31.5 36L20 25.5L9 36L4.5 31.5L15 20L4.5 9Z" />],
  ['negative squared cross mark', <Tile fill="green" ring="#2a8c12"><path d="M13 8.5L20 15L27 8.5L31.5 13L25 20L31.5 27L27 31.5L20 25L13 31.5L8.5 27L15 20L8.5 13Z" fill="white" /></Tile>],
  ['question', <MarkArt fill="red" dot d={QUESTION} />],
  ['grey question', <MarkArt fill="grey" dot d={QUESTION} />],
  ['grey exclamation', <MarkArt fill="grey" dot d={EXCLAIM} />],
  ['exclamation', <MarkArt fill="red" dot d={EXCLAIM} />],
  ['heart', <Art><path d="M20 37Q16 30 8 21Q1.5 13.5 3.5 8.5Q6 3 12 3.3Q18 4 20 9.5Q22 4 28 3.3Q34 3 36.5 8.5Q38.5 13.5 32 21Q24 30 20 37Z" fill="url(#heart)" stroke="#8c140c" /></Art>],
  ['heavy plus sign', <MarkArt fill="black" d="M16.5 5H23.5V16.5H35V23.5H23.5V35H16.5V23.5H5V16.5H16.5Z" />],
  ['heavy minus sign', <MarkArt fill="black" d="M5 16.5H35V23.8H5Z" />],
  ['heavy division sign', <MarkArt fill="black" d="M5 16.5H35V23.5H5ZM16 5H24V12.5H16ZM16 27.5H24V35H16Z" />],
  ['arrow right', <Tile fill="blue" ring="#55769e"><path d="M8 15H20V9.5L32.5 20L20 30V24.5H8Z" fill="white" /></Tile>],
  ['curly loop', <Art><path d="M1.5 11.5Q13 6.5 19.5 11.5" fill="none" stroke="#222" strokeWidth="2.4" strokeLinecap="round" /><path d="M38.5 11.5Q27 6.5 19.5 11.5" fill="none" stroke="#222" strokeWidth="2.4" strokeLinecap="round" /><ellipse cx="19.5" cy="22.5" rx="8.6" ry="10.6" fill="none" stroke="#222" strokeWidth="3.2" /></Art>],

  ['train', <Art><Line d="M5 4H19M8 4L5.5 6.5L12 9L19 6.5L16 4M12 1.5V4" c="#444" w={0.9} /><rect x="3" y="9" width="34" height="3" fill="#1f5a2c" /><rect x="0.5" y="11.5" width="39" height="20" fill="#f2e4c0" stroke="#a86c3c" /><rect x="1" y="12" width="38" height="4" fill="#e8ac6c" /><path d="M3 18H7V24H3ZM9 18H13V24H9ZM15 18H19V24H15ZM21 18H25V24H21ZM27 18H31V24H27ZM33 18H37V24H33Z" fill="#4c94d4" /></Art>],
  ['bullettrain side', <Art><path d="M7 21Q20 7 40 6V30H4Z" fill="#dcdfe6" stroke="#889" strokeWidth="0.6" /><path d="M10 18Q23 7 40 6V10Q26 10 17 18Z" fill="#2860d0" /><path d="M15 16Q20 11 28 9.5L24 14Q18 15 14 18Z" fill="#151a28" /><path d="M7 21L10 18L14 18L9 22Z" fill="#f2cf1c" /></Art>],
  ['bullettrain front', <Art><path d="M5 21Q11 16 14 10Q17 4 23 4H40V30H2Z" fill="#f0f1f3" stroke="#999" strokeWidth="0.8" /><path d="M15 13L18.5 8.5H30.5L27 13Z" fill="#1d3c70" /><Line d="M5 20.5Q12 17 40 16" c="#8ca4c4" w={1} /></Art>],
  ['metro', <Art><circle cx="20" cy="20" r="18" fill="#3a3d40" /><rect x="10.5" y="10" width="19" height="20" rx="4" fill="#202224" stroke="#cfd2d4" /><rect x="13" y="14.5" width="14" height="9" fill="#54cdf0" /><rect x="17.5" y="11.3" width="5" height="1.6" fill="#f2a41c" /></Art>],
  ['station', <Art><Line d="M6 4.5H19M8 4.5L10 8M17 4.5L15 8" c="#777" w={1} /><rect x="2" y="8" width="21" height="24" rx="2" fill="#3c3e42" /><path d="M8 9H10V11H8ZM14 9H16V11H14Z" fill="#ee3a24" /><rect x="4.5" y="13" width="16" height="6" fill="#6cacdc" /><rect x="28.5" y="10" width="10" height="6.5" fill="#666" stroke="#333" /><path d="M30 12H37M30 14.5H37M33.5 17V30" stroke="#bbb" strokeWidth="1.2" /></Art>],
  ['railway car', <Art><rect x="0.5" y="10.5" width="39" height="20" rx="1" fill="#f6ecc8" stroke="#b89068" /><path d="M3 14H7V24H3ZM10 14H14V24H10ZM16 14H20V24H16ZM22 14H26V24H22ZM28 14H32V24H28ZM34 14H38V24H34Z" fill="#4c8cd0" /></Art>],
  ['bus stop', <Art><Line d="M20 17V30" c="#777" w={2.4} /><circle cx="20" cy="10" r="8" fill="white" /><path d="M12.2 8A8 8 0 0 1 27.8 8Z" fill="#dc3414" /><path d="M12.2 12A8 8 0 0 0 27.8 12Z" fill="#3c7cf0" /></Art>],
  ['ambulance', <Art><path d="M13 2.5H17V6H13Z" fill="#dc2c1c" /><path d="M17 2.5H21V6H17Z" fill="#2c5cdc" /><path d="M2 22Q6 9 12 7H35Q39 7 39.5 18V30H2Z" fill="#e6e8ea" stroke="#888" /><path d="M4 20Q7 11 9.5 10H15V20Z" fill="#6cb8ec" stroke="#4c6c8c" strokeWidth="0.8" /><rect x="22" y="14" width="12" height="4" fill="#dc2c1c" /></Art>],
  ['fire engine', <Art><path d="M13 5H40M13 9H40M15 5L17 9L19 5L21 9L23 5L25 9L27 5L29 9L31 5L33 9L35 5L37 9L39 5" stroke="#aaa" strokeWidth="1.2" fill="none" /><path d="M3 8H10V11H3Z" fill="#f2a41c" /><rect x="0.5" y="11" width="11.5" height="20" fill="#e4e6e8" stroke="#778" /><rect x="3" y="14" width="6" height="9" fill="#4c94d4" /><rect x="12" y="10" width="6" height="20" fill="#8c8e90" /><rect x="18" y="11" width="22" height="20" fill="#e83c14" stroke="#a81c0c" /></Art>],
  ['police car', <Art><path d="M21 9H24.5V12H21Z" fill="#dc2c1c" /><path d="M24.5 9H28V12H24.5Z" fill="#2c5cdc" /><path d="M9 22L15 13Q16 12.5 18 12.5H33Q35.5 13 36 22Z" fill="#e0e0e0" stroke="#999" /><path d="M14 20L18 14.5H23V20ZM25 14.5H32L33 20H25Z" fill="#c4ccd2" /></Art>],
  ['taxi', <Art><rect x="24" y="9.5" width="4" height="3" fill="#777" /><path d="M10 22L16 12.5Q17 12 19 12H33Q36 12 36 22Z" fill="#3a3a3c" /><path d="M15 20L19 14.5H24V20ZM26 14.5H32V20H26Z" fill="#c8ccd0" /></Art>],
  ['red car', <Art><path d="M10 22Q16 14 22 13.5H33L37 10.5L36 22Z" fill="#dc3018" stroke="#8c1c10" strokeWidth="0.8" /><path d="M17 20Q20 16 24 15.8H32L33 20Z" fill="#f4f0ec" /></Art>],
];

function Path13() {
  return <Line d="M12.5 10.5Q14 6.5 17 4.5L19.5 9" c="#b98a18" w={1.4} />;
}

/* ---------- small icons ---------- */

const Pencil = ({ color }) => (
  <>
    <path d="M30 7L35 12L20 27L13 30L15.5 22.5Z" fill="none" stroke={color} strokeWidth="2.4" strokeLinejoin="round" />
    <path d="M27 10L32 15M17 27L28 15" stroke={color} strokeWidth="1.6" fill="none" />
    <path d="M13 30Q24 31.5 36 29.5" stroke={color} strokeWidth="2" strokeLinecap="round" fill="none" />
  </>
);

const MarkerIcon = ({ width, height, bg, fg, label }) => (
  <svg width={width} height={height} viewBox="0 0 49 37" preserveAspectRatio="none" role="img" aria-label={label}>
    <rect width="49" height="37" rx="8" fill={bg} />
    <path d="M6 2H8.4V4.4H6ZM10.4 2H12.8V4.4H10.4ZM14.8 2H17.2V4.4H14.8Z" fill={fg} />
    <Pencil color={fg} />
  </svg>
);

const Chevron = () => (
  <svg width="11" height="8" viewBox="0 0 11 8" aria-hidden="true">
    <path d="M1.5 1.5L5.5 5.5L9.5 1.5" fill="none" stroke="#1b1b1b" strokeWidth="2.4" strokeLinecap="round" />
  </svg>
);

const TrelloIcon = () => (
  <svg width="26" height="26" viewBox="0 0 26 26" aria-hidden="true">
    <rect width="26" height="26" rx="1.5" fill="#174f80" />
    <rect x="3" y="3" width="8.5" height="18" rx="1" fill="#888" />
    <rect x="14.5" y="3" width="8.5" height="11" rx="1" fill="#888" />
  </svg>
);

const IntercomIcon = () => (
  <svg width="16" height="16" viewBox="0 0 16 16" aria-hidden="true">
    <rect width="16" height="16" rx="2" fill="#3a8ef0" />
    <path d="M2.5 4V9M5.2 3V10M8 2.6V10.4M10.8 3V10M13.5 4V9M2.8 11.6Q8 15 13.2 11.6" stroke="white" strokeWidth="1.1" strokeLinecap="round" fill="none" />
  </svg>
);

const CloseIcon = () => (
  <svg width="8" height="8" viewBox="0 0 8 8" aria-hidden="true">
    <path d="M1 1L7 7M7 1L1 7" stroke="#7b7b7b" strokeWidth="1.4" />
  </svg>
);

const NAV = [
  ['Back', <path d="M16.5 9H2M8 3.5L2 9L8 14.5" stroke="#bdbdbd" strokeWidth="2" fill="none" />],
  ['Forward', <path d="M1.5 9H16M10 3.5L16 9L10 14.5" stroke="#bdbdbd" strokeWidth="2" fill="none" />],
  ['Reload', <><path d="M15 11.5A6.2 6.2 0 1 1 13.6 4.6" stroke="#505050" strokeWidth="2.6" fill="none" /><path d="M16.5 1V8H9.5Z" fill="#505050" /></>],
  ['Home', <path d="M9 1.5L12 4.6V2.5H14.2V6.8L17 9.6L15.8 10.8L14.6 9.8V16.5H10.8V11.5H7.2V16.5H3.4V9.8L2.2 10.8L1 9.6Z" fill="#505050" />],
];

const TOOLS = [
  ['Arrow', <path d="M4 5L15 16M15 7V16H6" />],
  ['Text', <path d="M3.5 7V3.5H16.5V7M10 3.5V17M7.5 17H12.5" />],
  ['Rectangle', <rect x="2.5" y="3.5" width="15" height="13" rx="1" />],
  ['Draw', <path d="M3 17L4.5 12L14 3L17 6L7.5 15.5ZM12 5L15 8M5.5 15L13.5 7" strokeWidth="1.6" />],
];

const ToolIcon = ({ children }) => (
  <svg width="20" height="20" viewBox="0 0 20 20" fill="none" stroke="#777a7b" strokeWidth="2" aria-hidden="true">{children}</svg>
);

const BrowserTop = () => (
  <>
    <TabStrip>
      <Lights>
        <Light color="#fc5b57" />
        <Light color="#fdbc2e" />
        <Light color="#35c649" />
      </Lights>
      <Tab>
        <IntercomIcon />
        <TabTitle>Intercom Acquire Live Chat</TabTitle>
        <TabClose aria-label="Close tab"><CloseIcon /></TabClose>
      </Tab>
      <Tab $active>
        <MarkerIcon width={16} height={13} bg="#2c2c2e" fg="#f2f2f2" label="Marker" />
        <TabTitle>Annotate | Marker</TabTitle>
        <TabClose aria-label="Close tab"><CloseIcon /></TabClose>
      </Tab>
      <NewTab aria-label="New tab" />
      <ProfileButton>Em</ProfileButton>
    </TabStrip>
    <NavBar>
      {NAV.map(([label, icon]) => (
        <NavButton key={label} aria-label={label}>
          <svg width="18" height="18" viewBox="0 0 18 18" aria-hidden="true">{icon}</svg>
        </NavButton>
      ))}
      <AddressBar>
        <svg width="13" height="17" viewBox="0 0 13 17" aria-hidden="true">
          <path d="M1 1H8L12 5V16H1ZM8 1V5H12" fill="white" stroke="#8b8b8b" strokeWidth="1.2" />
        </svg>
        <AddressInput
          aria-label="Address"
          defaultValue="chrome-extension://jofhoojcehdmaiibilpcoofpdbbddkkl/customize.html"
        />
        <svg width="19" height="19" viewBox="0 0 19 19" aria-hidden="true">
          <path d="M9.5 1.8L11.7 7.1L17.4 7.5L13 11.2L14.4 16.8L9.5 13.7L4.6 16.8L6 11.2L1.6 7.5L7.3 7.1Z" fill="white" stroke="#8d8d8d" strokeWidth="1.6" />
        </svg>
      </AddressBar>
      <Extensions>
        <MarkerIcon width={20} height={16} bg="black" fg="white" label="Marker extension" />
        <svg width="19" height="16" viewBox="0 0 19 16" role="img" aria-label="Pocket">
          <path d="M1.5 .5H17.5Q19 .5 19 2V6.5Q18.5 15.5 9.5 15.8Q.5 15.5 0 6.5V2Q0 .5 1.5 .5Z" fill="#757575" />
          <path d="M5 5.5L9.5 10L14 5.5" fill="none" stroke="white" strokeWidth="2.4" strokeLinecap="round" />
        </svg>
      </Extensions>
    </NavBar>
  </>
);

const CardToolbar = () => (
  <CardBar>
    <Group $gap={19}>
      <BarButton $width={69} $divided aria-label="Choose service">
        <TrelloIcon />
        <Chevron />
      </BarButton>
      <BarButton $width={169} $spread>
        Marker / Doing
        <Chevron />
      </BarButton>
    </Group>
    <Group $gap={9}>
      <CardLabel htmlFor="card">Card Called</CardLabel>
      <CardInput id="card" defaultValue="Improve translation" />
    </Group>
    <Group $gap={8}>
      <BarButton $width={118}>Add More +</BarButton>
    </Group>
    <SendButton>
      SEND
      <SendHint>CMD + ENTER</SendHint>
    </SendButton>
  </CardBar>
);

const DrawTools = () => (
  <Tools>
    {TOOLS.map(([label, icon]) => (
      <Tool key={label} aria-label={label}><ToolIcon>{icon}</ToolIcon></Tool>
    ))}
    <Tool $active aria-label="Emoji">
      <ToolIcon>
        <circle cx="10" cy="10" r="8.3" />
        <path d="M7 6V9M13 6V9" />
        <path d="M6 12H14Q13 15.5 10 15.5Q7 15.5 6 12Z" fill="#777a7b" stroke="none" />
      </ToolIcon>
    </Tool>
    <ToolDivider />
    <Tool aria-label="Color">
      <svg width="20" height="20" viewBox="0 0 20 20" aria-hidden="true">
        <circle cx="10" cy="10" r="9" fill="#8c1a04" stroke="#85807e" strokeWidth="2" />
      </svg>
    </Tool>
    <Tool aria-label="Undo"><ToolIcon><path d="M3 3V8H8M3.5 8Q7 3 12 4.5Q17.5 7 17 12Q16.5 16 13 18" /></ToolIcon></Tool>
    <Tool $faded aria-label="Redo"><ToolIcon><path d="M17 3V8H12M16.5 8Q13 3 8 4.5Q2.5 7 3 12Q3.5 16 7 18" /></ToolIcon></Tool>
  </Tools>
);

const EmojiPicker = () => (
  <Overlay>
    <Picker>
      <SearchBox>
        <SearchInput aria-label="Search for emojiis" placeholder="Search for emojiis..." />
      </SearchBox>
      <EmojiList>
        {EMOJIS.map(([name, art]) => (
          <EmojiButton key={name} aria-label={name} $selected={name === 'envelope'}>
            {art}
          </EmojiButton>
        ))}
      </EmojiList>
    </Picker>
  </Overlay>
);

const App = () => {
  return (
    <Page>
      <GlobalStyle />
      <Gradients />
      <Promo>
        <Headline>
          Report anything<br />
          with emojis,<br />
          it’s fun!
        </Headline>
        <Logo>
          <MarkerIcon width={49} height={37} bg="white" fg="#2b2b2b" label="Marker logo" />
          <LogoName>Marker</LogoName>
        </Logo>
      </Promo>
      <BrowserWindow>
        <BrowserTop />
        <Workspace>
          <CardToolbar />
          <DrawTools />
          <Shot>
            <ShotHeader>
              <ShotBrand />
              <Highlighted>r</Highlighted>
            </ShotHeader>
            <Sketch width="40" height="404" viewBox="0 0 40 404" aria-hidden="true">
              <path d="M-3 178Q8 166 26 153M-3 323Q8 336 26 352" fill="none" stroke="#8c1a08" strokeWidth="4" />
            </Sketch>
          </Shot>
          <EmojiPicker />
        </Workspace>
      </BrowserWindow>
    </Page>
  );
};

export default App;
